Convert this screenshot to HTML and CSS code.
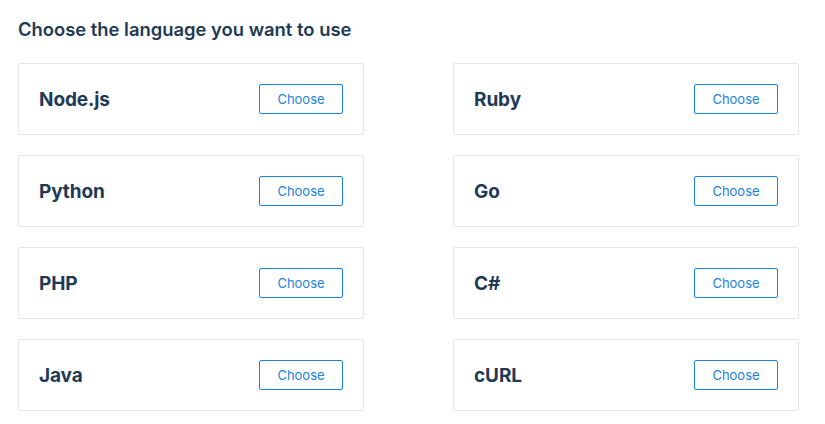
FILE: index.html
```html
<!DOCTYPE html>
<html lang="en">
<head>
<meta charset="utf-8">
<title>Choose language</title>
<link rel="stylesheet" href="styles.css">
</head>
<body>
<main class="page">
  <h1 class="title">Choose the language you want to use</h1>
  <div class="grid">
    <div class="card"><span class="lang">Node.js</span><button class="btn">Choose</button></div>
    <div class="card"><span class="lang">Ruby</span><button class="btn">Choose</button></div>
    <div class="card"><span class="lang">Python</span><button class="btn">Choose</button></div>
    <div class="card"><span class="lang">Go</span><button class="btn">Choose</button></div>
    <div class="card"><span class="lang">PHP</span><button class="btn">Choose</button></div>
    <div class="card"><span class="lang">C#</span><button class="btn">Choose</button></div>
    <div class="card"><span class="lang">Java</span><button class="btn">Choose</button></div>
    <div class="card"><span class="lang">cURL</span><button class="btn">Choose</button></div>
  </div>
</main>
</body>
</html>
```
FILE: styles.css
```css
html, body {
  margin: 0;
  padding: 0;
  background: #ffffff;
}
body {
  font-family: Inter, "Liberation Sans", Arial, sans-serif;
  color: #1e3a55;
}
.page {
  padding: 18px 18px 0 18px;
}
.title {
  margin: 0 0 22px 0;
  font-size: 18.4px;
  line-height: 23px;
  font-weight: 600;
  color: #1e3a55;
}
.grid {
  display: grid;
  grid-template-columns: 346px 346px;
  column-gap: 89px;
  row-gap: 20px;
}
.card {
  box-sizing: border-box;
  height: 72px;
  border: 1px solid #e4e6e8;
  border-radius: 2px;
  padding: 20px 20px;
  display: flex;
  align-items: center;
  justify-content: space-between;
}
.lang {
  font-size: 19px;
  font-weight: 700;
  color: #1e3a55;
  letter-spacing: -0.1px;
}
.btn {
  box-sizing: border-box;
  width: 84px;
  height: 30px;
  border: 1px solid #1a82e2;
  border-radius: 2px;
  background: #ffffff;
  color: #1a82e2;
  font-family: Inter, "Liberation Sans", Arial, sans-serif;
  font-size: 13px;
  padding: 0;
}
```
